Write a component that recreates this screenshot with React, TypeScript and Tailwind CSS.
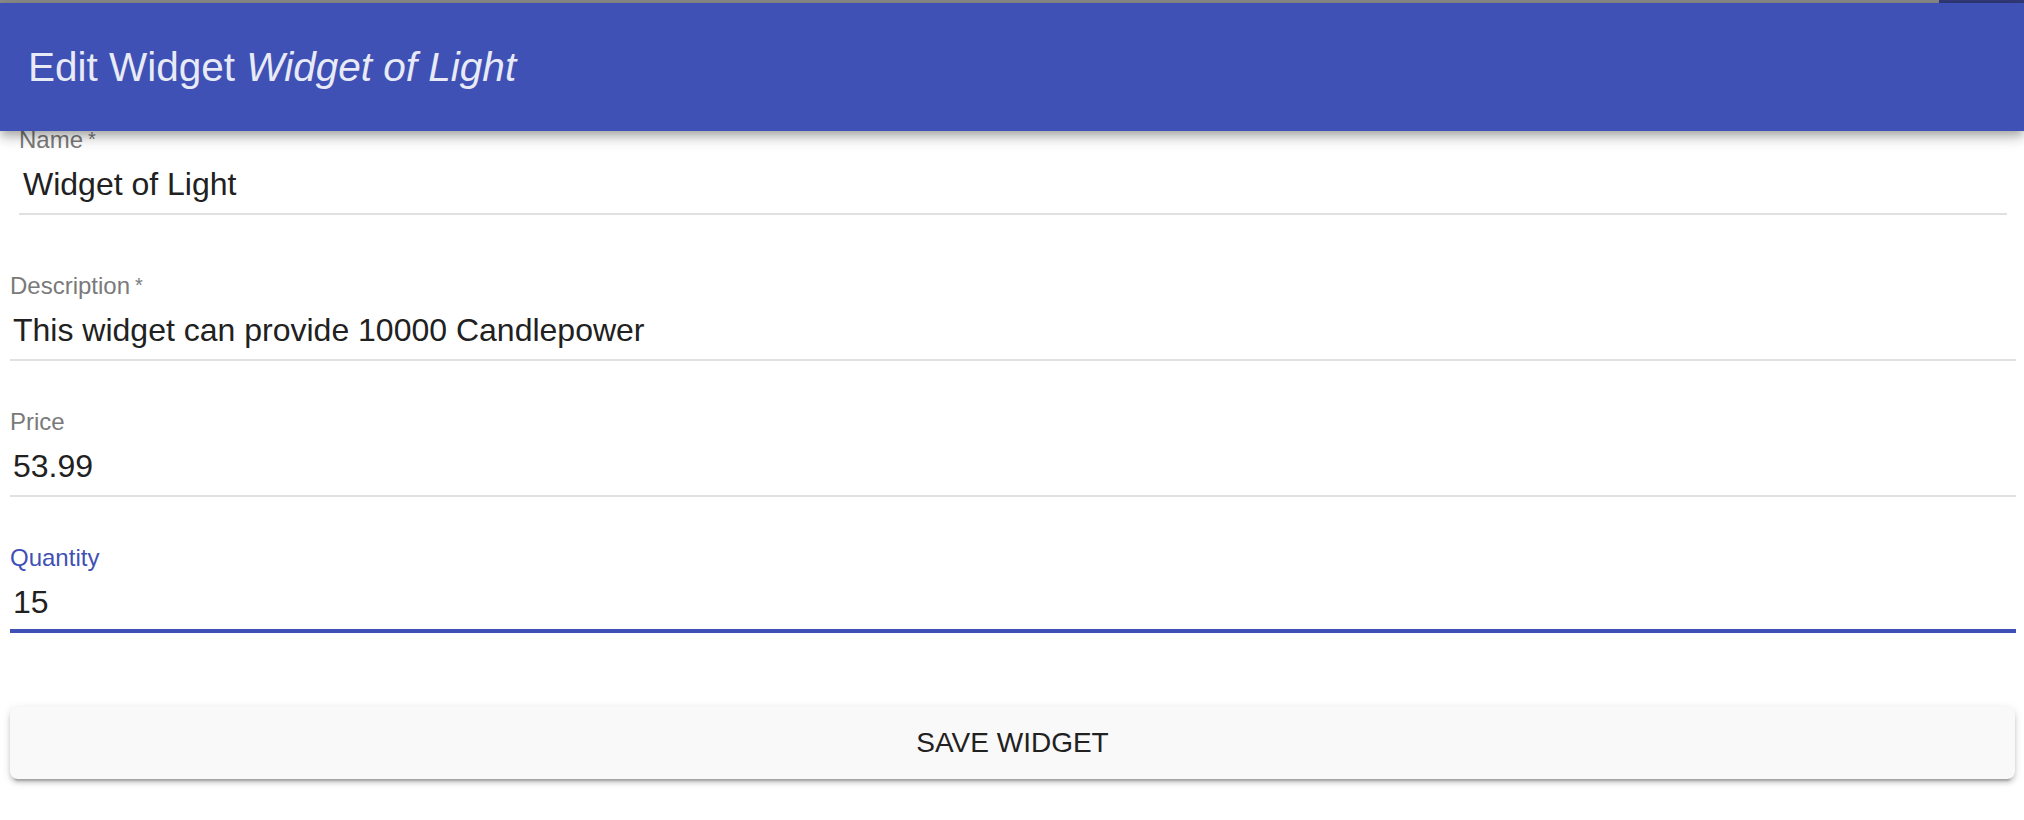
import { useState } from "react";

interface Field {
  id: string;
  label: string;
  value: string;
  required?: boolean;
}

const fields: Field[] = [
  { id: "description", label: "Description", value: "This widget can provide 10000 Candlepower", required: true },
  { id: "price", label: "Price", value: "53.99" },
  { id: "quantity", label: "Quantity", value: "15" },
];

const Asterisk = () => (
  <span className="relative -top-[2px] ml-[5px] text-[20px] leading-none">*</span>
);

const WidgetField = ({
  field,
  focused,
}: {
  field: Field;
  focused: boolean;
}) => {
  return (
    <div className="relative flex flex-col">
      <label
        className={`block h-[28px] text-[24px] leading-[28px] ${
          focused ? "text-[#3f51b5]" : "text-[#7a7a7a]"
        }`}
      >
        {field.label}
        {field.required && <Asterisk />}
      </label>
      <div className="relative mt-[11px] border-b-2 border-[#e0e0e0] pb-[10px]">
        <div className="pl-[3px] text-[32px] leading-[38px] text-[#212121]">
          {field.value}
        </div>
        {focused && (
          <div className="absolute right-0 -bottom-[2px] left-0 h-[4px] bg-[#3f51b5]" />
        )}
      </div>
    </div>
  );
};

export default function App() {
  const [focusedId] = useState("quantity");

  return (
    <div className="min-h-[820px] w-full bg-white font-['Liberation_Sans',Arial,sans-serif]">
      {/* browser-ish strip on top */}
      <div className="flex h-[3px]">
        <div className="flex-1 bg-[#8a8a8a]" />
        <div className="w-[85px] bg-[#323a78]" />
      </div>

      {/* app bar */}
      <header className="relative z-10 flex h-[128px] items-center bg-[#3f51b5] pl-[28px] shadow-[0_4px_8px_-2px_rgba(0,0,0,0.2),0_8px_10px_0_rgba(0,0,0,0.14),0_2px_20px_0_rgba(0,0,0,0.12)]">
        <h1 className="text-[40.5px] leading-[48px] font-normal text-[#e8eaf6]">
          Edit Widget <em className="italic">Widget of Light</em>
        </h1>
      </header>

      <form className="-mt-[5px] flex flex-col pr-[8px] pl-[10px]">
        {/* name field sits a bit further in */}
        <div className="mx-[9px] flex flex-col">
          <label className="block h-[28px] text-[24px] leading-[28px] text-[#7a7a7a]">
            Name
            <Asterisk />
          </label>
          <div className="mt-[11px] border-b-2 border-[#e0e0e0] pb-[10px]">
            <div className="pl-[4px] text-[32px] leading-[38px] text-[#212121]">
              Widget of Light
            </div>
          </div>
        </div>

        <div className="mt-[57px] flex flex-col gap-[47px]">
          {fields.map((f) => (
            <WidgetField key={f.id} field={f} focused={f.id === focusedId} />
          ))}
        </div>

        <button
          type="button"
          className="mt-[74px] mr-[1px] flex h-[72px] items-center justify-center rounded-[8px] bg-[#f9f9f9] text-[28px] leading-[32px] text-[#212121] uppercase shadow-[0_6px_2px_-4px_rgba(0,0,0,0.2),0_4px_4px_0_rgba(0,0,0,0.14),0_2px_10px_0_rgba(0,0,0,0.12)]"
        >
          Save Widget
        </button>
      </form>
    </div>
  );
}
